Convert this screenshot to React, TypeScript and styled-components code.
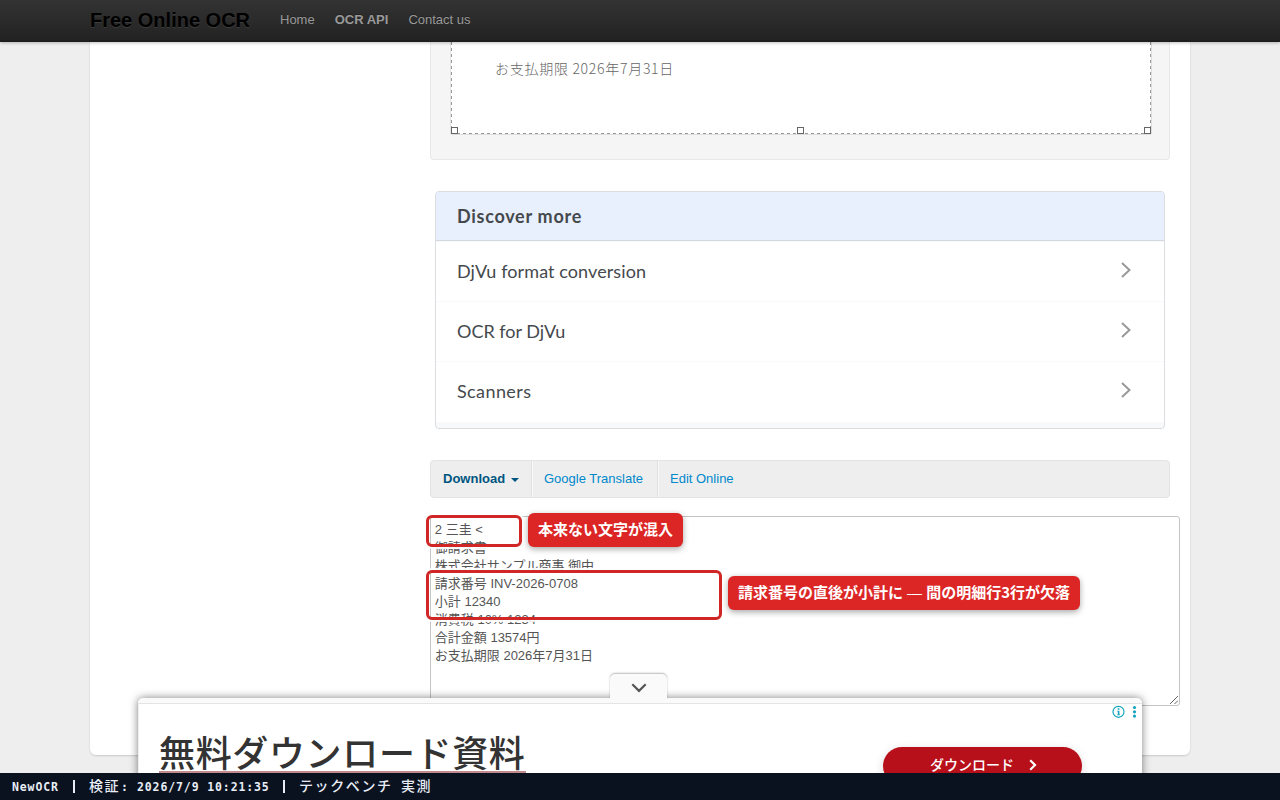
import React from 'react';
import styled, { createGlobalStyle } from 'styled-components';

const Global = createGlobalStyle`
  *, *::before, *::after { box-sizing: border-box; }
  html, body { margin: 0; padding: 0; }
  body { background: #eee; font-family: "Liberation Sans", "Noto Sans CJK JP", sans-serif; font-size: 13px; line-height: 18px; color: #555; }
`;

const Screen = styled.div`
  position: relative;
  width: 1280px;
  height: 800px;
  overflow: hidden;
  display: flex;
  flex-direction: column;
  background: #eee;
`;

const Navbar = styled.nav`
  position: relative;
  z-index: 2;
  flex: none;
  height: 42px;
  padding: 0 90px;
  display: flex;
  align-items: center;
  gap: 20px;
  background: linear-gradient(#333, #222);
  border-bottom: 1px solid #1e1e1e;
  box-shadow: 0 1px 3px rgba(0, 0, 0, 0.25), inset 0 -1px 0 rgba(0, 0, 0, 0.1);
`;

const Brand = styled.span`
  font-size: 20px;
  font-weight: 700;
  line-height: 40px;
  height: 41px;
  width: 170px;
  color: #000;
  text-shadow: 0 1px 0 rgba(255, 255, 255, 0.1), 0 0 30px rgba(255, 255, 255, 0.125);
`;

const NavLink = styled.span<{ $strong?: boolean }>`
  height: 41px;
  line-height: 39px;
  color: #999;
  font-weight: ${p => (p.$strong ? 700 : 400)};
  text-shadow: 0 -1px 0 rgba(0, 0, 0, 0.25);
`;

const Container = styled.main`
  flex: none;
  width: 1100px;
  height: 713px;
  margin: 0 auto;
  padding: 0 20px 0 340px;
  background: #fff;
  border-radius: 0 0 6px 6px;
  box-shadow: 0 1px 2px rgba(0, 0, 0, 0.15);
`;

const Well = styled.section`
  height: 118px;
  padding: 0 18px 25px 20px;
  background: #f5f5f5;
  border: 1px solid #e8e8e8;
  border-top: 0;
  border-radius: 0 0 4px 4px;
`;

const Selection = styled.div`
  position: relative;
  height: 92px;
  padding: 16px 0 0 44px;
  background-color: #fff;
  background-image:
    repeating-linear-gradient(90deg, #999 0 3px, #fff 3px 6px),
    repeating-linear-gradient(180deg, #999 0 3px, #fff 3px 6px),
    repeating-linear-gradient(180deg, #999 0 3px, #fff 3px 6px);
  background-size: 100% 1px, 1px 100%, 1px 100%;
  background-position: left bottom, left top, right top;
  background-repeat: no-repeat;
  box-shadow: 0 1px 0 #ddd, 1px 0 0 #ddd, -1px 0 0 #e4e4e4;
`;

const ScanText = styled.div`
  font-family: "Noto Sans CJK JP", sans-serif;
  font-weight: 300;
  font-size: 14px;
  line-height: 20px;
  letter-spacing: 0.72px;
  color: #666;
`;

const Handle = styled.i<{ $left: string }>`
  position: absolute;
  left: ${p => p.$left};
  bottom: 0;
  width: 7px;
  height: 7px;
  border: 1px solid #666;
  background: #fff;
`;

const Discover = styled.section`
  height: 238px;
  margin: 31px 5px 0;
  border: 1px solid #dadce0;
  border-radius: 4px;
  background: #f8f9fa;
  overflow: hidden;
  color: #45494d;
  font-family: Lato, sans-serif;
  font-size: 18px;
`;

const DiscoverHead = styled.div`
  height: 49px;
  padding-left: 21px;
  line-height: 48px;
  margin-bottom: 1px;
  background: #e8f0fe;
  border-bottom: 1px solid #d3d7de;
  font-weight: 700;
  letter-spacing: 0.72px;
`;

const DiscoverRow = styled.div`
  display: flex;
  align-items: center;
  justify-content: space-between;
  height: 60px;
  padding: 0 32px 2px 21px;
  background: #fff;
  border-bottom: 1px solid #f5f6f7;
  box-shadow: 0 -1px 0 #f8f9fa;
  &:last-child { border-bottom: 0; }
  svg { position: relative; top: -1px; }
`;

const RowLabel = styled.span<{ $track: number }>`
  letter-spacing: ${p => p.$track}px;
`;

const Tools = styled.div`
  display: flex;
  height: 38px;
  margin-top: 31px;
  border: 1px solid #e3e3e3;
  border-radius: 4px;
  background: #eee;
`;

const Tool = styled.span<{ $width: number; $strong?: boolean }>`
  width: ${p => p.$width}px;
  padding-left: 12px;
  line-height: 36px;
  border-right: 1px solid #e1e1e1;
  box-shadow: 1px 0 0 #f8f8f8;
  color: ${p => (p.$strong ? '#005580' : '#0088cc')};
  font-weight: ${p => (p.$strong ? 700 : 400)};
  &:last-child { border: 0; box-shadow: none; }
`;

const Caret = styled.i`
  display: inline-block;
  margin-left: 6px;
  vertical-align: 1px;
  border: 4px solid transparent;
  border-top-color: #005580;
  border-bottom: 0;
`;

const Output = styled.div`
  position: relative;
  width: 750px;
  height: 190px;
  margin-top: 18px;
  padding: 4px 4px 4px 3.8px;
  border: 1px solid #c4c4c4;
  border-radius: 3px;
  background: #fff;
  white-space: pre;
  color: #555;
`;

const Line = styled.div`
  height: 18px;
  line-height: 18px;
`;

const Grip = styled.svg`
  position: absolute;
  right: 1px;
  bottom: 1px;
`;

const Outline = styled.div<{ $top: number; $w: number; $h: number }>`
  position: absolute;
  left: -5px;
  top: ${p => p.$top}px;
  width: ${p => p.$w}px;
  height: ${p => p.$h}px;
  border: 3px solid #d02626;
  border-radius: 6px;
  box-shadow: 0 0 0 2px rgba(255, 255, 255, 0.9);
`;

const Callout = styled.div<{ $left: number; $top: number; $w: number }>`
  position: absolute;
  left: ${p => p.$left}px;
  top: ${p => p.$top}px;
  width: ${p => p.$w}px;
  height: 34px;
  padding-left: 10px;
  border-radius: 6px;
  background: #dc2626;
  box-shadow: 0 2px 6px rgba(0, 0, 0, 0.35);
  color: #fff;
  font: 700 15px/32px "Noto Sans CJK JP", sans-serif;
`;

const Dash = styled.span`
  font-family: "Liberation Sans", sans-serif;
  font-weight: 400;
  line-height: 1;
  margin: 0 0.7px;
`;

const Ad = styled.aside`
  position: absolute;
  z-index: 3;
  left: 138px;
  top: 698px;
  width: 1004px;
  height: 102px;
  border-top: 5px solid #fafafa;
  border-radius: 5px 5px 0 0;
  background: #fff;
  box-shadow: 0 0 8px rgba(0, 0, 0, 0.5), inset 0 1px 0 #e4e4e4, inset 1px 0 0 #eee;
  display: flex;
  justify-content: space-between;
  padding: 24px 60px 0 21px;
`;

const Tab = styled.div`
  position: absolute;
  left: 472px;
  top: -29px;
  width: 57px;
  height: 25px;
  display: flex;
  align-items: center;
  justify-content: center;
  padding-top: 3px;
  border-radius: 5px 5px 0 0;
  background: #fafafa;
  box-shadow: 0 -1px 2px rgba(0, 0, 0, 0.28);
  clip-path: inset(-5px -5px 0 -5px);
`;

const AdTitle = styled.div`
  height: 46px;
  border-bottom: 2px solid #c08a8f;
  color: #333;
  font: 500 36px/48px "Noto Sans CJK JP", sans-serif;
  letter-spacing: 0.65px;
`;

const AdButton = styled.div`
  display: flex;
  align-items: center;
  gap: 15px;
  width: 199px;
  height: 38px;
  margin-top: 20px;
  padding: 0 0 3px 47px;
  border-radius: 19px;
  background: #b8101b;
  box-shadow: 0 2px 10px rgba(0, 0, 0, 0.15);
  color: #fff;
  font: 500 14px/35px "Noto Sans CJK JP", sans-serif;
`;

const AdMarks = styled.svg`
  position: absolute;
  right: 4px;
  top: 2px;
`;

const StatusBar = styled.footer`
  position: absolute;
  z-index: 4;
  left: 0;
  right: 0;
  bottom: 0;
  height: 27px;
  padding-left: 12px;
  background: #0a1220;
  color: #e8edf5;
  display: flex;
  font: 700 11.5px/28px "DejaVu Sans Mono", monospace;
  letter-spacing: 0.88px;
  white-space: pre;
`;

const StatusPart = styled.span<{ $width: number; $jp?: boolean }>`
  width: ${p => p.$width}px;
  ${p => p.$jp && 'font: 500 14px/25px "Noto Sans CJK JP", sans-serif; letter-spacing: 1.6px;'}
`;

const StatusRule = styled.i`
  width: 2px;
  height: 13px;
  margin: 7px 14px 0 0;
  background: #e8edf5;
`;

const ocrLines = [
  '2 三圭 <',
  '御請求書',
  '株式会社サンプル商事 御中',
  '請求番号 INV-2026-0708',
  '小計 12340',
  '消費税 10% 1234',
  '合計金額 13574円',
  'お支払期限 2026年7月31日',
];

const topics = [
  { label: 'DjVu format conversion', track: 0.09 },
  { label: 'OCR for DjVu', track: -0.02 },
  { label: 'Scanners', track: 0.4 },
];

function Chevron() {
  return (
    <svg width="12" height="18" viewBox="0 0 12 18" fill="none" stroke="#999" strokeWidth="2">
      <path d="M2 2l7.500 7-7.500 7" />
    </svg>
  );
}

export default function App() {
  return (
    <Screen>
      <Global />
      <Navbar>
        <Brand>Free Online OCR</Brand>
        <NavLink>Home</NavLink>
        <NavLink $strong>OCR API</NavLink>
        <NavLink>Contact us</NavLink>
      </Navbar>
      <Container>
        <Well>
          <Selection>
            <ScanText>お支払期限 2026年7月31日</ScanText>
            <Handle $left="0px" />
            <Handle $left="346px" />
            <Handle $left="calc(100% - 7px)" />
          </Selection>
        </Well>
        <Discover>
          <DiscoverHead>Discover more</DiscoverHead>
          {topics.map(t => (
            <DiscoverRow key={t.label}>
              <RowLabel $track={t.track}>{t.label}</RowLabel>
              <Chevron />
            </DiscoverRow>
          ))}
        </Discover>
        <Tools>
          <Tool $width={101} $strong>Download<Caret /></Tool>
          <Tool $width={126}>Google Translate</Tool>
          <Tool $width={120}>Edit Online</Tool>
        </Tools>
        <Output>
          {ocrLines.map(l => <Line key={l}>{l}</Line>)}
          <Grip width="8" height="8" viewBox="0 0 8 8" stroke="#666" strokeWidth="1">
            <path d="M0 8L8 0M4.5 8L8 4.5" />
          </Grip>
          <Outline $top={-2} $w={96} $h={32} />
          <Outline $top={53} $w={296} $h={50} />
          <Callout $left={97} $top={-4} $w={155}>本来ない文字が混入</Callout>
          <Callout $left={297} $top={59} $w={352}>
            請求番号の直後が小計に <Dash>—</Dash> 間の明細行3行が欠落
          </Callout>
        </Output>
      </Container>
      <Ad>
        <Tab>
          <svg width="16" height="10" viewBox="0 0 16 10" fill="none" stroke="#555" strokeWidth="2.2">
            <path d="M1.300 1.200L8 7.900l6.700-6.700" />
          </svg>
        </Tab>
        <AdTitle>無料ダウンロード資料</AdTitle>
        <AdButton>
          ダウンロード
          <svg width="8" height="12" viewBox="0 0 8 12" fill="none" stroke="#fff" strokeWidth="2.2">
            <path d="M1.200 1.200L6 6l-4.800 4.800" />
          </svg>
        </AdButton>
        <AdMarks width="27" height="14" viewBox="0 0 27 14" fill="#12a5bd">
          <circle cx="7.500" cy="6.800" r="5.500" fill="none" stroke="#12a5bd" strokeWidth="1.200" />
          <path d="M6.700 3.300h1.700v1.500H6.700zM6.200 5.800h2.200v3.700h.6v.8H6.100v-.8h.7V6.600h-.6z" />
          <circle cx="23.500" cy="2.500" r="1.600" />
          <circle cx="23.500" cy="6.800" r="1.600" />
          <circle cx="23.500" cy="11.100" r="1.600" />
        </AdMarks>
      </Ad>
      <StatusBar>
        <StatusPart $width={61}>NewOCR</StatusPart>
        <StatusRule />
        <StatusPart $width={32} $jp>検証</StatusPart>
        <StatusPart $width={16}>:</StatusPart>
        <StatusPart $width={146}>2026/7/9 10:21:35</StatusPart>
        <StatusRule />
        <StatusPart $width={102} $jp>テックベンチ</StatusPart>
        <StatusPart $width={40} $jp>実測</StatusPart>
      </StatusBar>
    </Screen>
  );
}
